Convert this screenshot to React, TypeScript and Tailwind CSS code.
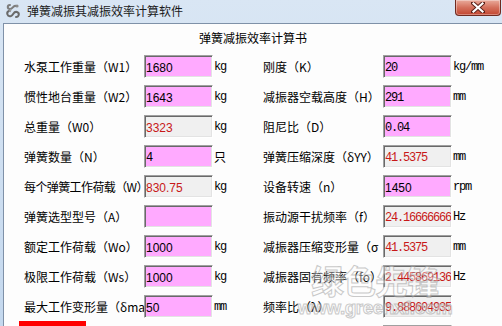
import React from "react";

type Cell = { label: string; value: string; kind: "pink" | "gray" | "none"; mono?: boolean; unit?: string; tight?: boolean };

const left: Cell[] = [
  { label: "水泵工作重量（W1）", value: "1680", kind: "pink", unit: "kg" },
  { label: "惯性地台重量（W2）", value: "1643", kind: "pink", unit: "kg" },
  { label: "总重量（W0）", value: "3323", kind: "gray", unit: "kg" },
  { label: "弹簧数量（N）", value: "4", kind: "pink", mono: true, unit: "只" },
  { label: "每个弹簧工作荷载（W）", value: "830.75", kind: "gray", unit: "kg", tight: true },
  { label: "弹簧选型型号（A）", value: "", kind: "pink" },
  { label: "额定工作荷载（Wo）", value: "1000", kind: "pink", unit: "kg" },
  { label: "极限工作荷载（Ws）", value: "1000", kind: "pink", unit: "kg" },
  { label: "最大工作变形量（δma", value: "50", kind: "pink", unit: "mm" },
];

const right: Cell[] = [
  { label: "刚度（K）", value: "20", kind: "pink", mono: true, unit: "kg/mm" },
  { label: "减振器空载高度（H）", value: "291", kind: "pink", mono: true, unit: "mm" },
  { label: "阻尼比（D）", value: "0.04", kind: "pink", mono: true },
  { label: "弹簧压缩深度（δYY）", value: "41.5375", kind: "gray", mono: true, unit: "mm" },
  { label: "设备转速（n）", value: "1450", kind: "pink", unit: "rpm" },
  { label: "振动源干扰频率（f）", value: "24.16666666", kind: "gray", mono: true, unit: "Hz" },
  { label: "减振器压缩变形量（σ", value: "41.5375", kind: "gray", mono: true, unit: "mm" },
  { label: "减振器固有频率（fo）", value: "2.445869136", kind: "gray", mono: true, unit: "Hz" },
  { label: "频率比（λ）", value: "9.888604935", kind: "gray", mono: true },
  { label: "", value: "", kind: "gray" },
];

function Box({ c }: { c: Cell }) {
  const bg = c.kind === "pink" ? "bg-[#ffaaff]" : "bg-[#f0f0f0]";
  const color = c.kind === "gray" ? "text-[#c81818]" : "text-black";
  const font = c.mono
    ? "font-['Liberation_Mono','Noto_Sans_CJK_SC',monospace] text-[12px] tracking-[-1.2px]"
    : "font-['Liberation_Sans',sans-serif] text-[12px]";
  return (
    <div
      className={`relative w-[69px] h-[23px] shrink-0 border border-t-[#a0a0a0] border-l-[#a0a0a0] border-r-white border-b-white shadow-[inset_1px_1px_0_#696969,inset_-1px_-1px_0_#e3e3e3] ${bg} ${color} ${font} flex items-center pl-[1px] pt-[2px] overflow-hidden whitespace-nowrap leading-[16px]`}
    >
      {c.value}
    </div>
  );
}

function Row({ c }: { c: Cell }) {
  return (
    <div className="flex items-center h-[23px]">
      <div
        className={`w-[120px] h-[18px] shrink-0 overflow-hidden whitespace-nowrap text-[12px] leading-[18px] text-black font-['Noto_Sans_CJK_SC',sans-serif] ${
          c.tight ? "tracking-[-0.6px]" : ""
        }`}
      >
        {c.label}
      </div>
      <Box c={c} />
      {c.unit && (
        <div
          className={`ml-[1px] text-[12px] leading-[16px] text-black ${
            c.unit === "只"
              ? "font-['Noto_Sans_CJK_SC',sans-serif]"
              : "font-['Liberation_Mono',monospace] tracking-[-1.2px]"
          }`}
        >
          {c.unit}
        </div>
      )}
    </div>
  );
}

function TitleIcon() {
  return (
    <svg width="17" height="17" viewBox="0 0 17 17" className="shrink-0">
      <path d="M5 3 C2 3 2 7 5 7 C8 7 8 3 11 4" fill="none" stroke="#7c7c7c" strokeWidth="2" strokeLinecap="round" />
      <path d="M4 9 C1 10 2 15 6 14 C9 13 8 9 12 10 C15 11 14 15 11 15" fill="none" stroke="#6a6a6a" strokeWidth="2" strokeLinecap="round" />
      <circle cx="12" cy="4" r="1.6" fill="#8a8a8a" />
      <path d="M6 7 L5 10" stroke="#9a9a9a" strokeWidth="1.5" />
    </svg>
  );
}

export default function App() {
  return (
    <div className="relative w-[502px] h-[326px] overflow-hidden bg-gradient-to-b from-[#d9e6f4] to-[#c4d8ee] select-none">
      {/* title bar */}
      <div className="flex items-start h-[23px]">
        <div className="flex items-center h-[21px] pl-[5px] gap-[5px]">
          <TitleIcon />
          <span className="text-[12px] leading-[16px] text-[#1a1a1a] font-['Noto_Sans_CJK_SC',sans-serif]">
            弹簧减振其减振效率计算软件
          </span>
        </div>
        <div className="ml-auto mr-[1px] w-[46px] h-[16px] rounded-b-[4px] border border-t-0 border-[#6f2a20] bg-gradient-to-b from-[#e9ab9c] via-[#d4705c] to-[#c24530] flex items-center justify-center shadow-[inset_0_0_0_1px_rgba(255,255,255,0.35)]">
          <svg width="14" height="11" viewBox="0 0 14 11">
            <path d="M2 1 L12 10 M12 1 L2 10" stroke="#5a2018" strokeWidth="4" strokeLinecap="square" />
            <path d="M2.5 1.5 L11.5 9.5 M11.5 1.5 L2.5 9.5" stroke="#ffffff" strokeWidth="2.2" strokeLinecap="square" />
          </svg>
        </div>
      </div>

      {/* client area */}
      <div className="ml-[3px] h-[303px] border-t border-l border-[#7f91a8] bg-[#fdfdfd] overflow-hidden">
        <div className="h-[31px] pt-[6px] text-center text-[12px] leading-[16px] text-black font-['Noto_Sans_CJK_SC',sans-serif]">
          弹簧减振效率计算书
        </div>
        <div className="flex pl-[20px]">
          <div className="w-[240px] flex flex-col gap-[7px]">
            {left.map((c, i) => (
              <Row key={i} c={c} />
            ))}
            <div className="ml-[-5px] mt-[-4px] w-[67px] h-[20px] bg-[#ff0000]" />
          </div>
          <div className="w-[240px] flex flex-col gap-[7px]">
            {right.map((c, i) => (
              <Row key={i} c={c} />
            ))}
          </div>
        </div>
      </div>

      {/* watermark overlay */}
      <div className="absolute left-[304px] top-[262px] w-[142px] flex flex-col items-center pointer-events-none opacity-55">
        <div className="text-[33px] leading-[36px] font-bold tracking-[-1px] text-[rgba(255,255,255,0.75)] [-webkit-text-stroke:1px_#a0a0a0] font-['Noto_Sans_CJK_SC',sans-serif]">
          绿色先锋
        </div>
        <div className="text-[19px] leading-[20px] font-bold tracking-[-0.5px] text-[rgba(255,255,255,0.75)] [-webkit-text-stroke:1px_#a0a0a0] font-['Liberation_Sans',sans-serif]">
          www.greenxf.com
        </div>
      </div>
    </div>
  );
}
